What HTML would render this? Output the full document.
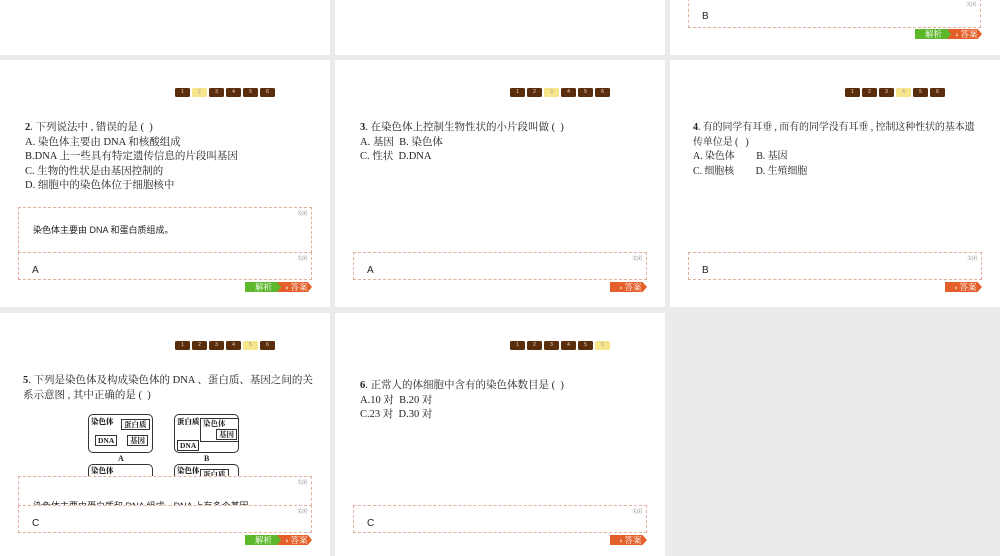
<!DOCTYPE html>
<html><head><meta charset="utf-8">
<style>
*{margin:0;padding:0;box-sizing:border-box}
body{width:1000px;height:556px;background:#ebebeb;position:relative;overflow:hidden;font-family:"Liberation Serif","Noto Serif CJK SC",serif;color:#222}
.p{position:absolute;background:#fff;overflow:hidden}
.a{position:absolute}
.q{position:absolute;font-size:10.5px;line-height:14.5px;white-space:nowrap}
.nav{position:absolute;display:flex;gap:2px}
.nav span{width:15px;height:9px;background:#5a2e0c;border-radius:1.5px;color:#e8d8c0;font:5px "Liberation Sans",sans-serif;text-align:center;line-height:9px}
.nav span.on{background:#f6e58a;color:#999}
.box{position:absolute;border:1px dashed #e0b0a0;background:#fff}
.cl{position:absolute;right:4px;top:2px;font-size:5px;color:#777}
.ans{position:absolute;left:13px;font-size:10px;font-family:"Liberation Sans",sans-serif}
.g{position:absolute;height:10px;background:#5cb82a;color:#fff;font-size:8.5px;line-height:10px;text-align:center;clip-path:polygon(0 0,88% 0,100% 50%,88% 100%,0 100%)}
.o{position:absolute;height:10px;background:#e4602a;color:#fff;font-size:8.5px;line-height:10px;padding-left:4px;text-align:center;clip-path:polygon(0 0,88% 0,100% 50%,88% 100%,0 100%,12% 50%)}
.o.s{clip-path:polygon(0 0,88% 0,100% 50%,88% 100%,0 100%)}
.o em{font-style:normal;font-weight:bold;font-size:7px;margin-right:2px;font-family:"DejaVu Sans",sans-serif}
.d{position:absolute;border:1.3px solid #333;border-radius:5px;background:#fff;font-size:7.5px;font-weight:bold;line-height:9px}
.d i{position:absolute;font-style:normal;border:1px solid #333;padding:0 2px;background:#fff}
.d b{position:absolute}
</style></head><body>

<div class="p" style="left:0;top:0;width:330px;height:55px"></div>
<div class="p" style="left:335px;top:0;width:330px;height:55px"></div>
<div class="p" style="left:670px;top:0;width:330px;height:55px">
  <div class="box" style="left:18px;top:-2px;width:293px;height:30px"><span class="cl">关闭</span><span class="ans" style="top:12px">B</span></div>
  <div class="g" style="left:245px;top:29px;width:37px">解析</div>
  <div class="o" style="left:277px;top:29px;width:35px"><em>›</em>答案</div>
</div>

<div class="p" style="left:0;top:60px;width:330px;height:247px">
  <div class="nav" style="left:175px;top:28px"><span>1</span><span class="on">2</span><span>3</span><span>4</span><span>5</span><span>6</span></div>
  <div class="q" style="left:25px;top:61px"><b>2</b>. 下列说法中 , 错误的是 (&nbsp;&nbsp;)<br>A. 染色体主要由 DNA 和核酸组成<br>B.DNA 上一些具有特定遗传信息的片段叫基因<br>C. 生物的性状是由基因控制的<br>D. 细胞中的染色体位于细胞核中</div>
  <div class="box" style="left:18px;top:147px;width:294px;height:46px"><span class="cl">关闭</span><span class="a" style="left:14px;top:15px;font-size:9px;font-family:'Liberation Sans','Noto Sans CJK SC',sans-serif">染色体主要由 DNA 和蛋白质组成。</span></div>
  <div class="box" style="left:18px;top:192px;width:294px;height:28px"><span class="cl">关闭</span><span class="ans" style="top:12px">A</span></div>
  <div class="g" style="left:245px;top:222px;width:37px">解析</div>
  <div class="o" style="left:277px;top:222px;width:35px"><em>›</em>答案</div>
</div>

<div class="p" style="left:335px;top:60px;width:330px;height:247px">
  <div class="nav" style="left:175px;top:28px"><span>1</span><span>2</span><span class="on">3</span><span>4</span><span>5</span><span>6</span></div>
  <div class="q" style="left:25px;top:61px"><b>3</b>. 在染色体上控制生物性状的小片段叫做 (&nbsp;&nbsp;)<br>A. 基因&nbsp; B. 染色体<br>C. 性状&nbsp; D.DNA</div>
  <div class="box" style="left:18px;top:192px;width:294px;height:28px"><span class="cl">关闭</span><span class="ans" style="top:12px">A</span></div>
  <div class="o s" style="left:275px;top:222px;width:37px"><em>›</em>答案</div>
</div>

<div class="p" style="left:670px;top:60px;width:330px;height:247px">
  <div class="nav" style="left:175px;top:28px"><span>1</span><span>2</span><span>3</span><span class="on">4</span><span>5</span><span>6</span></div>
  <div class="q" style="left:23px;top:61px;font-size:10px;letter-spacing:-0.1px"><b>4</b>. 有的同学有耳垂 , 而有的同学没有耳垂 , 控制这种性状的基本遗<br>传单位是 (&nbsp;&nbsp;&nbsp;)<br>A. 染色体&nbsp;&nbsp;&nbsp;&nbsp;&nbsp;&nbsp;&nbsp;&nbsp; B. 基因<br>C. 细胞核&nbsp;&nbsp;&nbsp;&nbsp;&nbsp;&nbsp;&nbsp;&nbsp; D. 生殖细胞</div>
  <div class="box" style="left:18px;top:192px;width:294px;height:28px"><span class="cl">关闭</span><span class="ans" style="top:12px">B</span></div>
  <div class="o s" style="left:275px;top:222px;width:37px"><em>›</em>答案</div>
</div>

<div class="p" style="left:0;top:313px;width:330px;height:243px">
  <div class="nav" style="left:175px;top:28px"><span>1</span><span>2</span><span>3</span><span>4</span><span class="on">5</span><span>6</span></div>
  <div class="q" style="left:23px;top:61px"><b>5</b>. 下列是染色体及构成染色体的 DNA 、蛋白质、基因之间的关<br>系示意图 , 其中正确的是 (&nbsp;&nbsp;)</div>
  <div class="d" style="left:88px;top:101px;width:65px;height:39px"><b style="left:2px;top:2px">染色体</b><i style="left:32px;top:4px">蛋白质</i><i style="left:6px;top:20px">DNA</i><i style="left:38px;top:20px">基因</i></div>
  <div class="d" style="left:174px;top:101px;width:65px;height:39px"><b style="left:2px;top:2px">蛋白质</b><i style="left:25px;top:3px;width:39px;height:24px;border-radius:0">染色体</i><i style="left:41px;top:14px">基因</i><i style="left:2px;top:25px">DNA</i></div>
  <div class="a" style="left:118px;top:141px;font-size:8px;font-weight:bold">A</div>
  <div class="a" style="left:204px;top:141px;font-size:8px;font-weight:bold">B</div>
  <div class="d" style="left:88px;top:151px;width:65px;height:30px"><b style="left:2px;top:1px">染色体</b></div>
  <div class="d" style="left:174px;top:151px;width:65px;height:30px"><b style="left:2px;top:1px">染色体</b><i style="left:25px;top:4px">蛋白质</i></div>
  <div class="box" style="left:18px;top:163px;width:294px;height:30px;overflow:hidden"><span class="cl">关闭</span><span class="a" style="left:14px;top:22px;font-size:9px;font-family:'Liberation Sans','Noto Sans CJK SC',sans-serif">染色体主要由蛋白质和 DNA 组成，DNA 上有多个基因。</span></div>
  <div class="box" style="left:18px;top:192px;width:294px;height:28px"><span class="cl">关闭</span><span class="ans" style="top:12px">C</span></div>
  <div class="g" style="left:245px;top:222px;width:37px">解析</div>
  <div class="o" style="left:277px;top:222px;width:35px"><em>›</em>答案</div>
</div>

<div class="p" style="left:335px;top:313px;width:330px;height:243px">
  <div class="nav" style="left:175px;top:28px"><span>1</span><span>2</span><span>3</span><span>4</span><span>5</span><span class="on">6</span></div>
  <div class="q" style="left:25px;top:66px"><b>6</b>. 正常人的体细胞中含有的染色体数目是 (&nbsp;&nbsp;)<br>A.10 对&nbsp; B.20 对<br>C.23 对&nbsp; D.30 对</div>
  <div class="box" style="left:18px;top:192px;width:294px;height:28px"><span class="cl">关闭</span><span class="ans" style="top:12px">C</span></div>
  <div class="o s" style="left:275px;top:222px;width:37px"><em>›</em>答案</div>
</div>

</body></html>
